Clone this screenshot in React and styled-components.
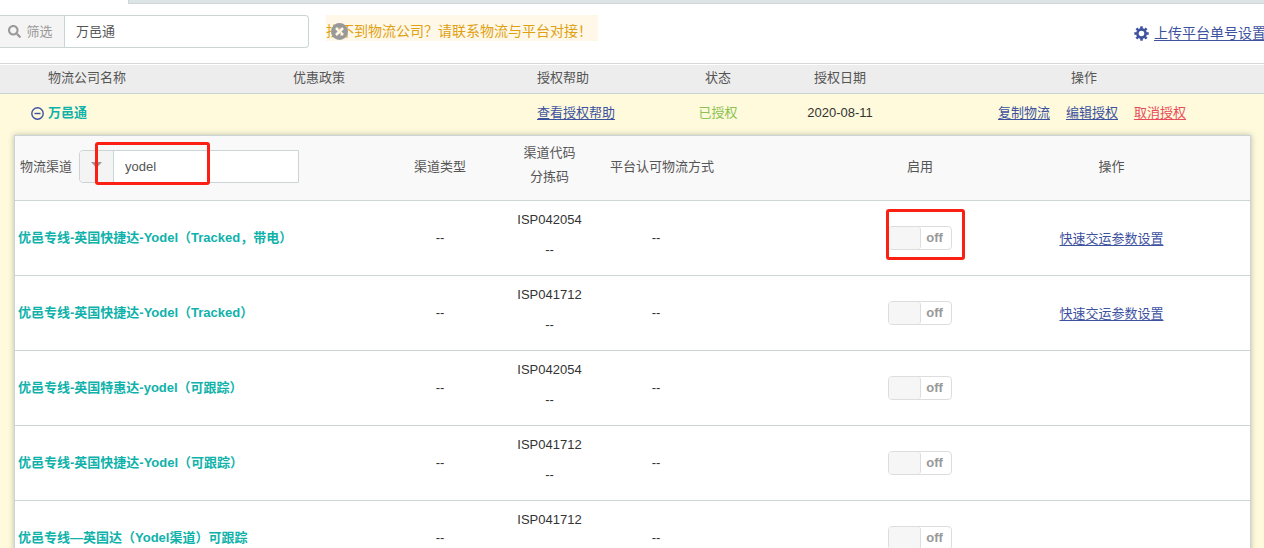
import { useState } from "react";
import styled, { createGlobalStyle } from "styled-components";
import { FaSearch } from "react-icons/fa";

const GlobalStyle = createGlobalStyle`
  * { box-sizing: border-box; }
  body {
    margin: 0;
    background: #fff;
    color: #555;
    font: 13px/20px "Liberation Sans", "Noto Sans CJK SC", sans-serif;
  }
  input { font: inherit; color: inherit; }
`;

const Page = styled.div`
  height: 100vh;
  overflow: hidden;
`;

const TabStrip = styled.div`
  height: 4px;
  margin-left: 128px;
  background: #dde4e6;
  border: solid #cfd8d8;
  border-width: 0 0 1px 1px;
`;

const Toolbar = styled.header`
  display: flex;
  align-items: flex-start;
  height: 60px;
  padding-top: 11px;
  border-bottom: 1px solid #d5d9d9;
`;

const InputGroup = styled.div`
  position: relative;
  display: flex;
  width: ${(p) => p.$width};
  height: 33px;
  border: 1px solid #cbd5d5;
  border-left-width: ${(p) => (p.$flush ? "0" : "1px")};
  border-radius: ${(p) => (p.$flush ? "0 4px 4px 0" : "4px 0 0 4px")};
  background: #fff;
`;

const Addon = styled.label`
  display: flex;
  flex: none;
  align-items: center;
  justify-content: center;
  gap: 5px;
  width: ${(p) => p.$width};
  padding-right: ${(p) => p.$padRight || "0"};
  border-right: 1px solid #cbd5d5;
  border-radius: inherit;
  border-top-right-radius: 0;
  border-bottom-right-radius: 0;
  background: #f4f4f4;
  color: #999;
`;

const TextInput = styled.input`
  flex: 1;
  min-width: 0;
  padding: 0 11px;
  border: 0;
  outline: 0;
  background: transparent;
`;

const Notice = styled.div`
  position: relative;
  height: 26px;
  margin-left: 17px;
  padding-right: 6px;
  background: #fff8e8;
  color: #e0a010;
  font-size: 14px;
  line-height: 32px;
  white-space: nowrap;
`;

const CloseButton = styled.button`
  position: absolute;
  top: 8px;
  left: 5px;
  width: 17px;
  height: 17px;
  padding: 0;
  border: 0;
  background: none;
  svg { display: block; }
`;

const Settings = styled.div`
  display: flex;
  align-items: center;
  gap: 5px;
  margin: 8px -2px 0 auto;
  color: #3d529f;
  font-size: 14px;
  white-space: nowrap;
`;

const TextLink = styled.a`
  color: ${(p) => (p.$danger ? "#e84c5c" : "#3d529f")};
  text-decoration: underline;
  text-underline-offset: 2px;
`;

const CompanyTable = styled.table`
  width: 100%;
  margin-top: 1px;
  table-layout: fixed;
  border-collapse: separate;
  border-spacing: 0;
`;

const CompanyHead = styled.th`
  height: 29px;
  padding: 0 0 2px ${(p) => p.$indent || "0"};
  border-bottom: 1px solid #ccd5d5;
  background: #ededed;
  font-weight: normal;
  text-align: ${(p) => p.$align || "left"};
`;

const CompanyCell = styled.td`
  height: 38px;
  padding: 0 0 0 ${(p) => p.$indent || "0"};
  background: #fefadb;
  color: ${(p) => p.$color || "#333"};
  text-align: ${(p) => p.$align || "left"};
`;

const CompanyName = styled.div`
  display: flex;
  align-items: center;
  gap: 4px;
  color: #0fb2aa;
  font-weight: bold;
`;

const CollapseButton = styled.button`
  width: 13px;
  height: 13px;
  padding: 0;
  border: 0;
  background: none;
  svg { display: block; }
`;

const Actions = styled.div`
  display: flex;
  justify-content: center;
  gap: 16px;
  padding-left: 16px;
`;

const PanelCell = styled.td`
  padding: 3px 13px 0 14px;
  background: #fefadb;
`;

const Panel = styled.div`
  border: 1px solid #cbd5d8;
  background: #fff;
  box-shadow: 0 0 6px rgba(0, 0, 0, 0.25);
`;

const ChannelTable = styled.table`
  width: 100%;
  table-layout: fixed;
  border-collapse: separate;
  border-spacing: 0;
`;

const ChannelHead = styled.th`
  height: 65px;
  padding: ${(p) => p.$pad || "0 0 2px"};
  border-bottom: 1px solid #ccd6d6;
  background: #f9f9f9;
  font-weight: normal;
  line-height: 24px;
  text-align: ${(p) => p.$align || "center"};
  white-space: nowrap;
`;

const ChannelCell = styled.td`
  height: 75px;
  padding: ${(p) => p.$pad || "0"};
  border-bottom: 1px solid #ccd6d6;
  color: #333;
  line-height: 30px;
  text-align: center;
`;

const ChannelName = styled(ChannelCell)`
  padding: 0 0 0 3px;
  color: #0fb2aa;
  font-weight: bold;
  text-align: left;
`;

const ChannelFilter = styled.div`
  display: flex;
  align-items: center;
  gap: 7px;
`;

const SwitchLabel = styled.label`
  position: relative;
  display: flex;
  width: 64px;
  height: 24px;
  margin: 0 auto;
  flex-direction: ${(p) => (p.$on ? "row-reverse" : "row")};
  border: 1px solid #ddd;
  border-radius: 4px;
  color: #999;
  font-weight: bold;
  line-height: 22px;
  input {
    position: absolute;
    inset: 0;
    margin: 0;
    opacity: 0;
  }
`;

const Knob = styled.span`
  width: 32px;
  border-right: 1px solid #ddd;
  border-radius: 3px;
  background: #f6f6f6;
`;

const SwitchText = styled.span`
  flex: 1;
  padding-right: 3px;
`;

// red frame laid over a control
const Marker = styled.span`
  position: absolute;
  top: ${(p) => p.$top};
  left: ${(p) => p.$left};
  width: ${(p) => p.$width};
  height: ${(p) => p.$height};
  border: 3px solid #fb2013;
  border-radius: 3px;
  pointer-events: none;
`;

const channels = [
  { id: 1, name: "优邑专线-英国快捷达-Yodel（Tracked，带电）", code: "ISP042054", params: true, marked: true },
  { id: 2, name: "优邑专线-英国快捷达-Yodel（Tracked）", code: "ISP041712", params: true },
  { id: 3, name: "优邑专线-英国特惠达-yodel（可跟踪）", code: "ISP042054" },
  { id: 4, name: "优邑专线-英国快捷达-Yodel（可跟踪）", code: "ISP041712" },
  { id: 5, name: "优邑专线—英国达（Yodel渠道）可跟踪", code: "ISP041712" },
];

function GearIcon() {
  return (
    <svg width="15" height="15" viewBox="0 0 15 15" fill="none" stroke="currentColor">
      <circle cx="7.5" cy="7.5" r="4.1" strokeWidth="2.6" />
      {[0, 45, 90, 135, 180, 225, 270, 315].map((a) => (
        <path key={a} d="M7.5 2.8V.3" strokeWidth="2.6" transform={`rotate(${a} 7.5 7.5)`} />
      ))}
    </svg>
  );
}

function Switch({ label, marked }) {
  const [on, setOn] = useState(false);
  return (
    <SwitchLabel $on={on}>
      <input type="checkbox" aria-label={label} checked={on} onChange={() => setOn(!on)} />
      <Knob />
      <SwitchText>{on ? "on" : "off"}</SwitchText>
      {marked && <Marker $top="-18px" $left="-3px" $width="79px" $height="51px" />}
    </SwitchLabel>
  );
}

function ChannelPanel() {
  const [query, setQuery] = useState("yodel");
  const rows = channels.filter((c) => c.name.toLowerCase().includes(query.toLowerCase()));

  return (
    <Panel>
      <ChannelTable>
        <colgroup>
          <col width="363" />
          <col width="124" />
          <col width="95" />
          <col width="118" />
          <col width="258" />
          <col />
        </colgroup>
        <thead>
          <tr>
            <ChannelHead $align="left" $pad="0 0 3px 5px">
              <ChannelFilter>
                物流渠道
                <InputGroup $width="220px">
                  <Addon $width="34px" htmlFor="channel" aria-label="物流渠道">
                    <svg width="11" height="12" viewBox="0 0 11 12" fill="currentColor">
                      <path d="M0 1h11L6.5 6v2l-2-1V6z" />
                    </svg>
                  </Addon>
                  <TextInput id="channel" value={query} onChange={(e) => setQuery(e.target.value)} />
                  <Marker $top="-9px" $left="15px" $width="115px" $height="43px" />
                </InputGroup>
              </ChannelFilter>
            </ChannelHead>
            <ChannelHead>渠道类型</ChannelHead>
            <ChannelHead $pad="0 0 7px">
              渠道代码
              <br />
              分拣码
            </ChannelHead>
            <ChannelHead $align="left" $pad="0 0 2px 13px">平台认可物流方式</ChannelHead>
            <ChannelHead $pad="0 0 2px 152px">启用</ChannelHead>
            <ChannelHead>操作</ChannelHead>
          </tr>
        </thead>
        <tbody>
          {rows.map((c) => (
            <tr key={c.id}>
              <ChannelName>{c.name}</ChannelName>
              <ChannelCell>--</ChannelCell>
              <ChannelCell $pad="0 0 7px">
                {c.code}
                <br />
                --
              </ChannelCell>
              <ChannelCell>--</ChannelCell>
              <ChannelCell $pad="0 0 0 152px">
                <Switch label={c.name} marked={c.marked} />
              </ChannelCell>
              <ChannelCell $pad="2px 0 0">
                {c.params && <TextLink href="#params">快速交运参数设置</TextLink>}
              </ChannelCell>
            </tr>
          ))}
        </tbody>
      </ChannelTable>
    </Panel>
  );
}

function App() {
  const [company, setCompany] = useState("万邑通");
  const [notice, setNotice] = useState(true);
  const [open, setOpen] = useState(true);

  return (
    <Page>
      <GlobalStyle />
      <TabStrip />
      <Toolbar>
        <InputGroup $width="309px" $flush>
          <Addon $width="65px" $padRight="3px" htmlFor="company">
            <FaSearch size={13} />
            筛选
          </Addon>
          <TextInput id="company" value={company} onChange={(e) => setCompany(e.target.value)} />
        </InputGroup>
        {notice && (
          <Notice>
            找不到物流公司？请联系物流与平台对接！
            <CloseButton aria-label="关闭" onClick={() => setNotice(false)}>
              <svg width="17" height="17" viewBox="0 0 17 17">
                <circle cx="8.5" cy="8.5" r="8.5" fill="#999" />
                <path d="M5 5l7 7M12 5l-7 7" stroke="#fff8e8" strokeWidth="2.6" />
                <path d="M8 4.5v3M9.5 12.5v-3" stroke="#e8c890" />
              </svg>
            </CloseButton>
          </Notice>
        )}
        <Settings>
          <GearIcon />
          <TextLink href="#upload">上传平台单号设置</TextLink>
        </Settings>
      </Toolbar>
      <CompanyTable>
        <colgroup>
          <col width="293" />
          <col width="244" />
          <col width="123" />
          <col width="116" />
          <col width="128" />
          <col />
        </colgroup>
        <thead>
          <tr>
            <CompanyHead $indent="48px">物流公司名称</CompanyHead>
            <CompanyHead>优惠政策</CompanyHead>
            <CompanyHead>授权帮助</CompanyHead>
            <CompanyHead $align="center">状态</CompanyHead>
            <CompanyHead $align="center">授权日期</CompanyHead>
            <CompanyHead $align="center">操作</CompanyHead>
          </tr>
        </thead>
        <tbody>
          <tr>
            <CompanyCell $indent="31px">
              <CompanyName>
                <CollapseButton aria-label="万邑通" aria-expanded={open} onClick={() => setOpen(!open)}>
                  <svg width="13" height="13" viewBox="0 0 13 13" fill="none" stroke="#3d529f" strokeWidth="1.4">
                    <circle cx="6.5" cy="6.5" r="5.7" />
                    <path d="M3.5 6.5h6" />
                  </svg>
                </CollapseButton>
                万邑通
              </CompanyName>
            </CompanyCell>
            <CompanyCell />
            <CompanyCell>
              <TextLink href="#help">查看授权帮助</TextLink>
            </CompanyCell>
            <CompanyCell $align="center" $color="#8cc152">已授权</CompanyCell>
            <CompanyCell $align="center">2020-08-11</CompanyCell>
            <CompanyCell>
              <Actions>
                <TextLink href="#copy">复制物流</TextLink>
                <TextLink href="#edit">编辑授权</TextLink>
                <TextLink href="#cancel" $danger>取消授权</TextLink>
              </Actions>
            </CompanyCell>
          </tr>
          {open && (
            <tr>
              <PanelCell colSpan={6}>
                <ChannelPanel />
              </PanelCell>
            </tr>
          )}
        </tbody>
      </CompanyTable>
    </Page>
  );
}

export default App;
